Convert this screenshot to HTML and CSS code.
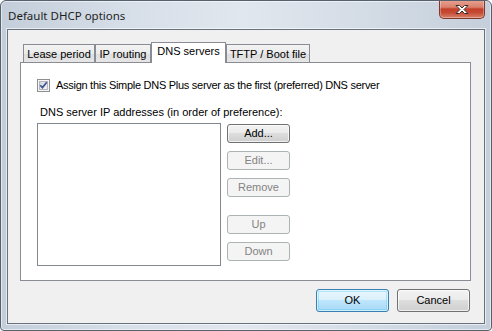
FILE: index.html
```html
<!DOCTYPE html>
<html>
<head>
<meta charset="utf-8">
<link rel="stylesheet" href="styles.css">
</head>
<body>
<div class="window">
  <div class="titlebar">
    <span class="title">Default DHCP options</span>
    <div class="close">
      <svg width="16" height="11" viewBox="0 0 16 11">
        <path d="M2 1.5 H5.5 L8 4 L10.5 1.5 H14 L10 5.5 L14 9.5 H10.5 L8 7 L5.5 9.5 H2 L6 5.5 Z" fill="#ffffff" stroke="#3b2a2a" stroke-width="1" stroke-linejoin="round"/>
      </svg>
    </div>
  </div>
  <div class="client">
    <div class="tabs">
      <div class="tab t-lease">Lease period</div>
      <div class="tab t-ip">IP routing</div>
      <div class="tab active t-dns">DNS servers</div>
      <div class="tab t-tftp">TFTP / Boot file</div>
    </div>
    <div class="panel">
      <div class="check-row">
        <span class="checkbox">
          <svg width="13" height="13" viewBox="0 0 13 13">
            <defs>
              <linearGradient id="cg" x1="0" y1="0" x2="1" y2="1">
                <stop offset="0" stop-color="#cfd3da"/>
                <stop offset="1" stop-color="#f7f7f8"/>
              </linearGradient>
            </defs>
            <rect x="0.5" y="0.5" width="12" height="12" fill="#f6f6f6" stroke="#8e8f8f"/>
            <rect x="2.5" y="2.5" width="8" height="8" fill="url(#cg)" stroke="#b4b8be"/>
            <path d="M3.3 6.3 L5.4 8.6 L9.8 3.2" fill="none" stroke="#3f5596" stroke-width="1.7"/>
          </svg>
        </span>
        <span class="check-text">Assign this Simple DNS Plus server as the first (preferred) DNS server</span>
      </div>
      <div class="list-label">DNS server IP addresses (in order of preference):</div>
      <div class="list-area">
        <div class="listbox"></div>
        <div class="side-buttons">
          <button class="btn side">Add...</button>
          <button class="btn side" disabled>Edit...</button>
          <button class="btn side" disabled>Remove</button>
          <button class="btn side spaced" disabled>Up</button>
          <button class="btn side" disabled>Down</button>
        </div>
      </div>
    </div>
    <div class="footer">
      <button class="btn dialog default">OK</button>
      <button class="btn dialog">Cancel</button>
    </div>
  </div>
</div>
</body>
</html>
```

FILE: styles.css
```css
* { box-sizing: border-box; }
html, body { margin: 0; padding: 0; }
body {
  width: 492px;
  height: 331px;
  background: #ffffff;
  font-family: "Liberation Sans", Arial, sans-serif;
  font-size: 11px;
  color: #000;
}
.window {
  width: 492px;
  height: 331px;
  border: 1px solid #56616d;
  border-radius: 6px 6px 4px 4px;
  background: linear-gradient(to right, #c3ceda 0%, #d6dee8 25%, #e1e7ee 50%, #d3dbe5 75%, #c4cfdb 100%);
  box-shadow: inset 0 0 0 1px rgba(255,255,255,0.55);
  display: flex;
  flex-direction: column;
  padding: 0 6px 6px 6px;
  overflow: hidden;
}
.titlebar {
  height: 28px;
  display: flex;
  align-items: flex-start;
  flex: none;
}
.title {
  font-family: "Noto Sans", "Open Sans", sans-serif;
  font-size: 11.5px;
  color: #1e1e1e;
  margin-top: 7px;
  padding-left: 1px;
}
.close {
  margin-left: auto;
  margin-top: -1px;
  width: 46px;
  height: 19px;
  border: 1px solid #80382c;
  border-top: none;
  border-radius: 0 0 5px 5px;
  background: linear-gradient(to bottom, #e8a394 0%, #d9806c 40%, #c23f28 50%, #c64a33 70%, #d9826a 100%);
  box-shadow: inset 0 0 0 1px rgba(255,255,255,0.3);
  display: flex;
  align-items: center;
  justify-content: center;
}
.close svg { display: block; margin-top: 1px; }
.client {
  flex: 1;
  background: #f0f0f0;
  border: 1px solid #68727e;
  box-shadow: 0 0 0 1px rgba(255,255,255,0.6);
  padding: 12px 13px 11px 12px;
  display: flex;
  flex-direction: column;
}
.tabs {
  height: 20px;
  display: flex;
  align-items: flex-end;
  padding-left: 3px;
  flex: none;
}
.tab {
  height: 18px;
  border: 1px solid #898c95;
  border-bottom: none;
  background: linear-gradient(to bottom, #f3f3f3 0%, #ebebeb 50%, #dddddd 51%, #e6e6e6 100%);
  text-align: center;
  line-height: 13px;
  padding-top: 3px;
  white-space: nowrap;
}
.tab.active {
  height: 21px;
  margin-bottom: -1px;
  background: #ffffff;
  position: relative;
  z-index: 2;
  padding-top: 2px;
}
.t-lease { width: 72px; }
.t-ip { width: 56px; }
.t-dns { width: 75px; }
.t-tftp { width: 84px; }
.panel {
  position: relative;
  z-index: 1;
  height: 219px;
  flex: none;
  border: 1px solid #898c95;
  background: #ffffff;
  padding: 16px 16px;
}
.check-row {
  display: flex;
  align-items: center;
  gap: 6px;
  height: 13px;
  line-height: 13px;
}
.check-text { letter-spacing: -0.28px; }
.checkbox { width: 13px; height: 13px; flex: none; }
.checkbox svg { display: block; }
.list-label {
  margin-top: 14px;
  padding-left: 3px;
  line-height: 13px;
}
.list-area {
  margin-top: 4px;
  display: flex;
  gap: 6px;
}
.listbox {
  width: 184px;
  height: 143px;
  border: 1px solid #828790;
  background: #fff;
}
.side-buttons {
  display: flex;
  flex-direction: column;
  gap: 8px;
  padding-top: 1px;
}
.btn {
  font-family: "Liberation Sans", Arial, sans-serif;
  font-size: 11px;
  color: #000;
  border: 1px solid #707070;
  border-radius: 3px;
  background: linear-gradient(to bottom, #f2f2f2 0%, #ebebeb 49%, #dddddd 50%, #cfcfcf 100%);
  box-shadow: inset 0 0 0 1px rgba(255,255,255,0.7);
  padding: 0;
  margin: 0;
  line-height: 13px;
}
.btn:disabled {
  color: #838383;
  border-color: #adb2b5;
  background: #f4f4f4;
  box-shadow: none;
}
.side { width: 63px; height: 19px; }
.side.spaced { margin-top: 10px; }
.footer {
  margin-top: 8px;
  display: flex;
  justify-content: flex-end;
  gap: 8px;
  padding-right: 1px;
}
.dialog { width: 73px; height: 23px; }
.dialog.default {
  border-color: #3c7fb1;
  background: linear-gradient(to bottom, #eaf6fd 0%, #d9f0fc 49%, #bee6fd 50%, #a7d9f5 100%);
  box-shadow: inset 0 0 0 1px rgba(255,255,255,0.6), inset 0 0 0 2px rgba(72,200,240,0.35);
}
```
